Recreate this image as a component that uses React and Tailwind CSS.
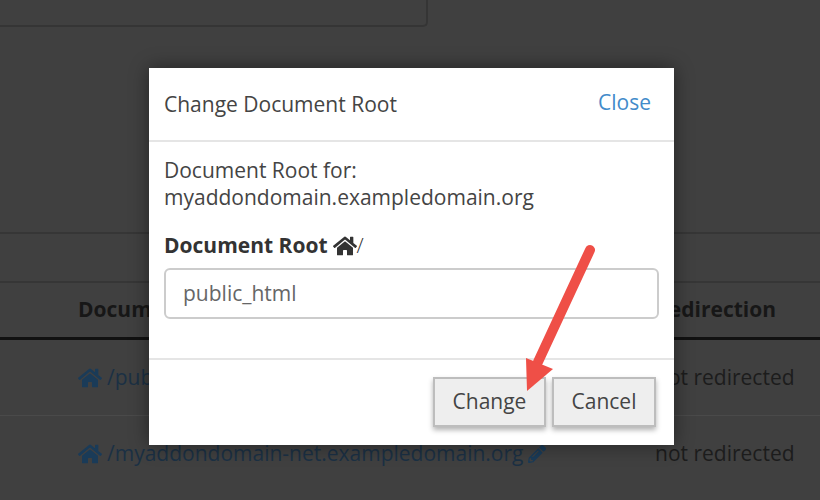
import React from "react";
import { FaHome, FaPencilAlt } from "react-icons/fa";

const font = "font-['Open_Sans',sans-serif]";

const Row = ({ path, border }) => (
  <div className={`flex items-center pl-[78px] ${border ? "h-[76px] border-b border-[#4a4a4a]" : "h-[75px]"}`}>
    <div className="flex w-[577px] items-center text-[21px] text-[#1b3044]">
      <FaHome className="h-[24px] w-[24px] shrink-0 text-[#1a3b58]" />
      <span className="ml-[5px]">{path}</span>
      <FaPencilAlt className="ml-[5px] h-[18px] w-[18px] shrink-0 text-[#1a3b58]" />
    </div>
    <span className="text-[21px] text-[#1c1c1c]">not redirected</span>
  </div>
);

export default function App() {
  return (
    <div className={`relative h-[500px] w-[820px] overflow-hidden bg-[#404040] ${font}`}>
      {/* dimmed page behind the modal */}
      <div className="h-[27px] w-[428px] rounded-br-[5px] border-r-2 border-b-2 border-[#353535]" />
      <div className="mt-[205px] h-[49px] border-t-2 border-[#363636]" />
      <div className="flex h-[56px] items-center border-t-2 border-[#363636] pl-[78px] text-[21px] font-bold text-[#171717]">
        <span className="w-[577px]">Document Root</span>
        <span>Redirection</span>
      </div>
      <div className="h-[3px] bg-[#111111]" />
      <Row path="/public_html" border />
      <Row path="/myaddondomain-net.exampledomain.org" />

      {/* modal */}
      <div className="absolute top-[68px] left-[149px] flex h-[377px] w-[525px] flex-col bg-white text-[#444444] shadow-[0_0_18px_rgba(0,0,0,0.45)]">
        <div className="flex h-[74px] shrink-0 items-center justify-between border-b-2 border-[#e5e5e5] pr-[23px] pl-[15px]">
          <h3 className="mt-[2px] text-[21px] font-normal">Change Document Root</h3>
          <a className="mb-[2px] text-[21px] text-[#428bca]">Close</a>
        </div>
        <div className="flex-1 px-[15px] pt-[15px]">
          <p className="text-[21px] leading-[27px]">
            Document Root for:
            <br />
            myaddondomain.exampledomain.org
          </p>
          <div className="mt-[21px] flex items-center text-[21px] leading-[27px] text-[#333333]">
            <b>Document Root</b>
            <FaHome className="ml-[5px] h-[24px] w-[24px]" />
            <span className="font-light">/</span>
          </div>
          <input
            readOnly
            value="public_html"
            className="mt-[9px] h-[51px] w-full rounded-[6px] border-2 border-[#cccccc] pr-[18px] pl-[17px] pb-[2px] text-[21px] text-[#666666] outline-none"
          />
        </div>
        <div className="flex h-[87px] shrink-0 items-start justify-end gap-[6px] border-t-2 border-[#e5e5e5] pt-[17px] pr-[18px]">
          <button className="h-[50px] w-[113px] border-2 border-[#bdbdbd] bg-[#eeeeee] text-[21px] text-[#444444] shadow-[0_3px_5px_rgba(0,0,0,0.3)]">Change</button>
          <button className="h-[50px] w-[104px] border-2 border-[#bdbdbd] bg-[#eeeeee] text-[21px] text-[#444444] shadow-[0_3px_5px_rgba(0,0,0,0.3)]">Cancel</button>
        </div>
      </div>

      {/* annotation arrow */}
      <svg className="absolute top-0 left-0" width="820" height="500" viewBox="0 0 820 500">
        <line x1="590" y1="250" x2="538" y2="362" stroke="#ef4f47" strokeWidth="10" strokeLinecap="round" />
        <polygon points="526,358 553,369 527,391" fill="#ef4f47" />
      </svg>
    </div>
  );
}
